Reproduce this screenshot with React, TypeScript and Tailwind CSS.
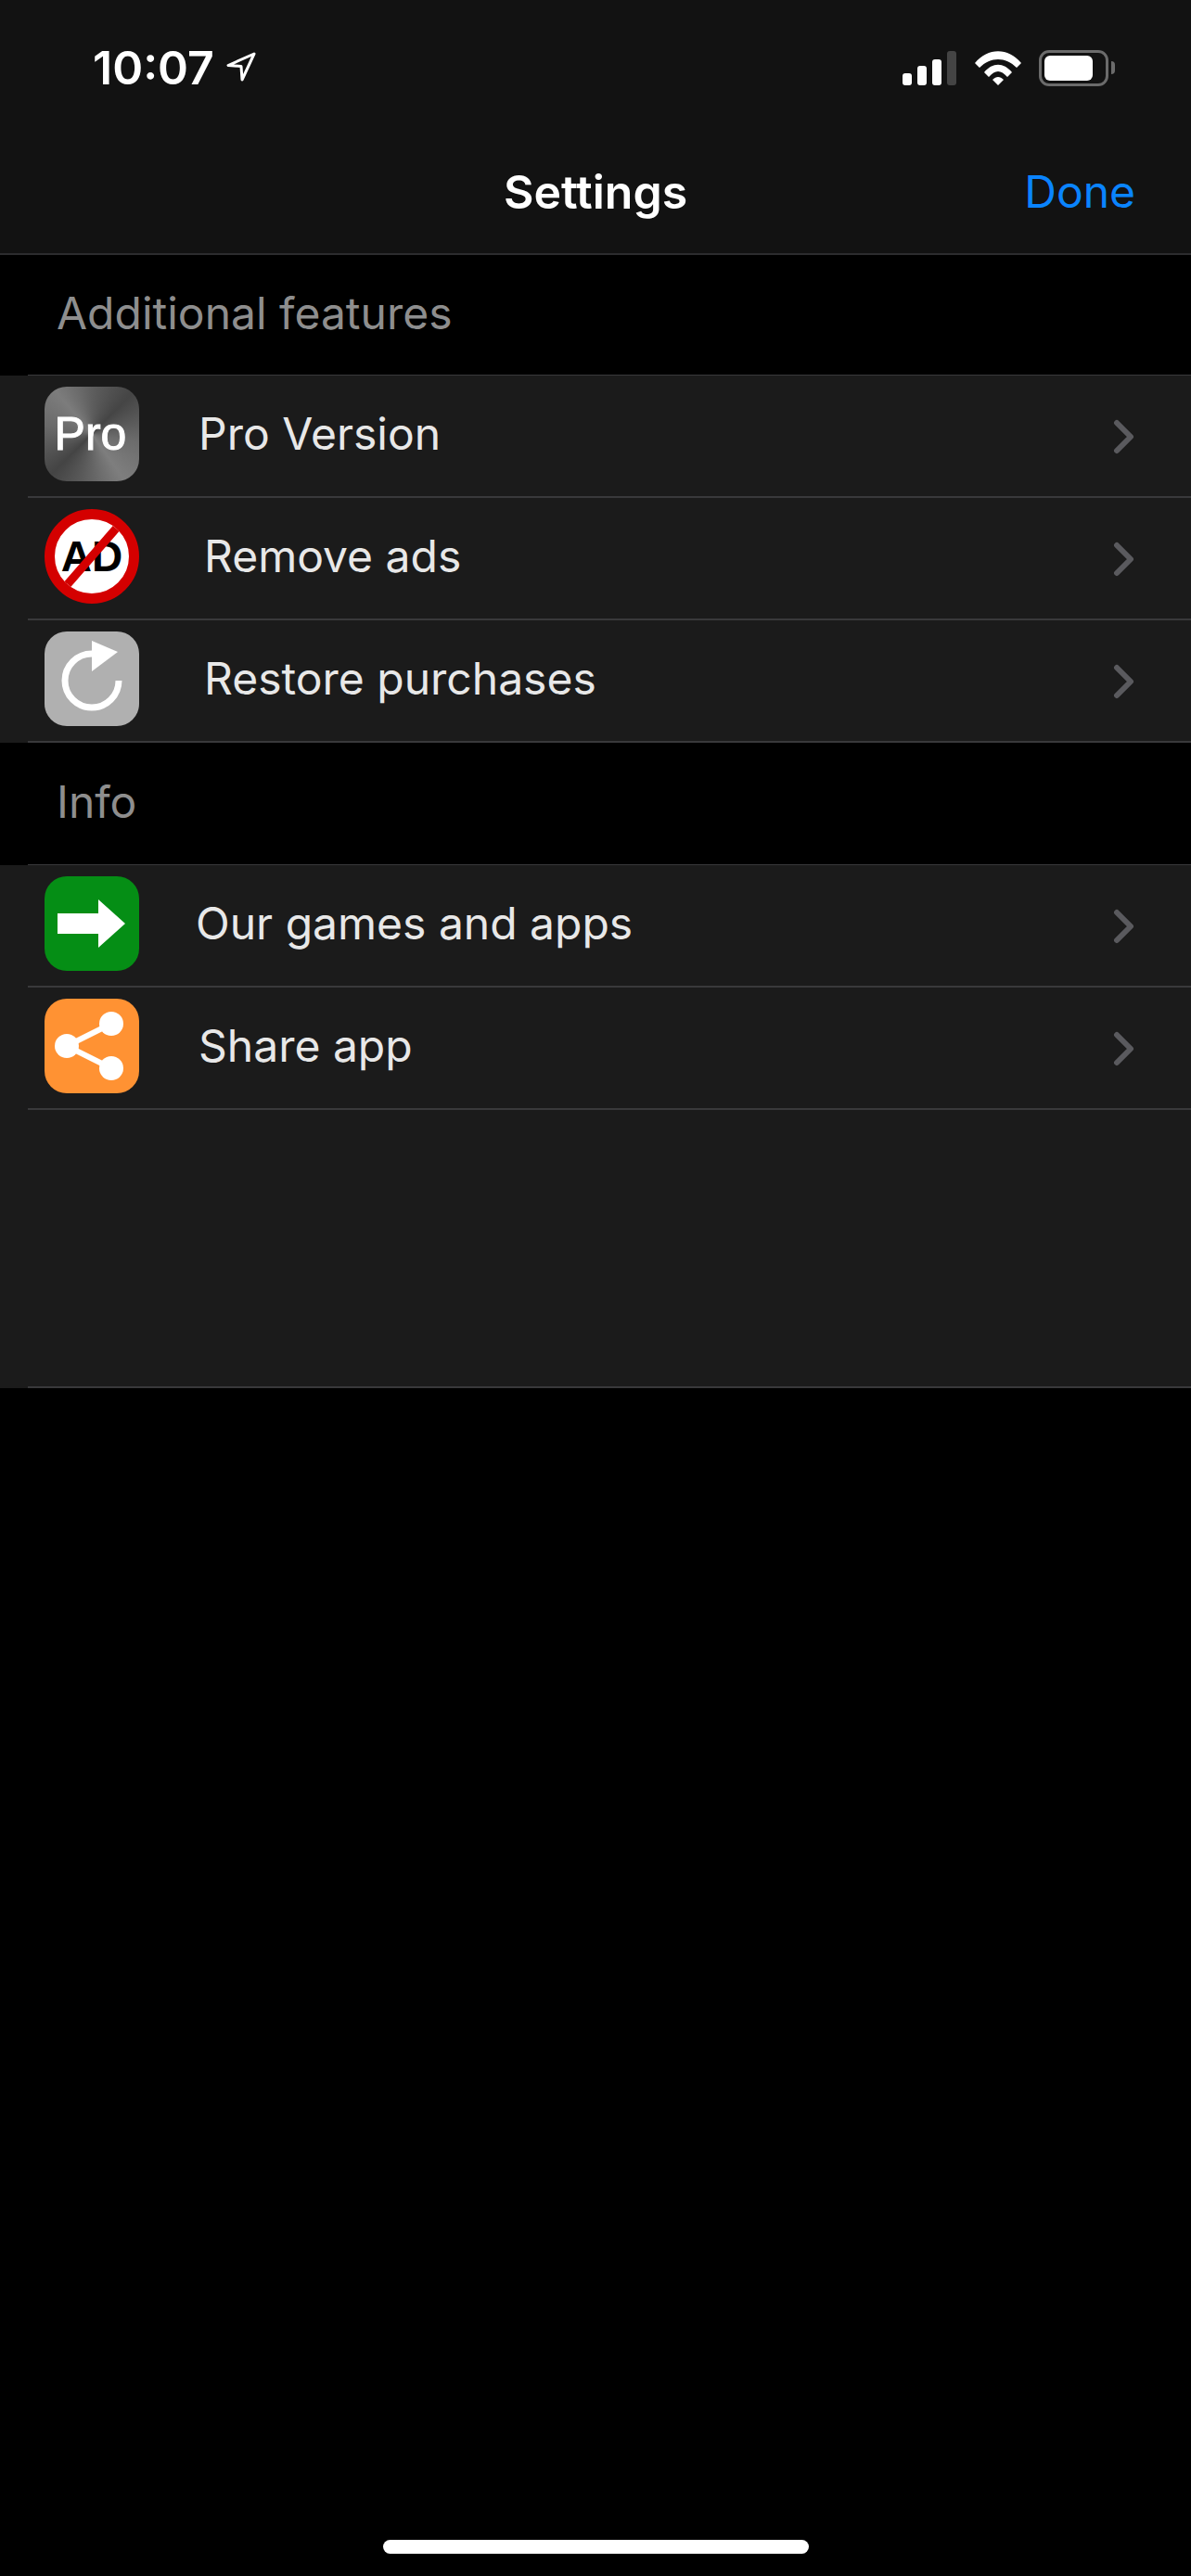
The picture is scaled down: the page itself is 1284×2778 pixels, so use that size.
import type { ReactNode } from 'react';

const font = "font-['Inter',sans-serif]";

function LocationArrow() {
  return (
    <svg viewBox="0 0 32 32" className="w-[32px] h-[32px] ml-[13px] mt-[-3px]" fill="none">
      <path d="M30 2 L2 14.500 L16 15.500 L17 30 Z" stroke="#fff" strokeWidth="3" strokeLinejoin="round" />
    </svg>
  );
}

function StatusIcons() {
  return (
    <div className="flex items-center">
      <div className="flex items-end gap-[6px] h-[37px]">
        <div className="w-[10px] h-[13px] rounded-[3px] bg-white" />
        <div className="w-[10px] h-[21px] rounded-[3px] bg-white" />
        <div className="w-[10px] h-[28px] rounded-[3px] bg-white" />
        <div className="w-[10px] h-[37px] rounded-[3px] bg-[#444]" />
      </div>
      <svg viewBox="0 0 50 37" className="w-[50px] h-[37px] ml-[20px]" fill="#fff">
        <path d="M0 13 C14 -4 36 -4 50 13 L45 18 C33 6 17 6 5 18 Z" />
        <path d="M10 23 C19 12 31 12 40 23 L35 28 C28 20 22 20 15 28 Z" />
        <path d="M19 31 C23 27 27 27 31 31 L25 37 Z" />
      </svg>
      <div className="flex items-center ml-[19px]">
        <div className="w-[75px] h-[39px] rounded-[11px] border-[3px] border-[#6b6b6b] p-[3px]">
          <div className="w-[52px] h-[27px] rounded-[6px] bg-white" />
        </div>
        <div className="w-[4px] h-[14px] ml-[3px] rounded-r-full bg-[#6b6b6b]" />
      </div>
    </div>
  );
}

function IconFrame({ className, children }: { className: string; children?: ReactNode }) {
  return (
    <div className={`w-[102px] h-[102px] shrink-0 rounded-[24px] flex items-center justify-center ${className}`}>
      {children}
    </div>
  );
}

function ProIcon() {
  return (
    <IconFrame className="bg-[conic-gradient(from_0deg,#5e5e5e,#454545_45deg,#6c6c6c_100deg,#7e7e7e_145deg,#5c5c5c_190deg,#444_225deg,#6a6a6a_280deg,#7c7c7c_320deg,#5e5e5e)]">
      <span className="mr-[3px] text-white text-[50px] font-['Liberation_Sans',sans-serif] leading-none [-webkit-text-stroke:1px_white]">Pro</span>
    </IconFrame>
  );
}

function NoAdIcon() {
  return (
    <div className="relative w-[102px] h-[102px] shrink-0 rounded-full bg-white border-[11px] border-[#d40000] flex items-center justify-center overflow-hidden">
      <span className="text-black text-[46px] font-bold font-['Liberation_Sans',sans-serif] leading-none">AD</span>
      <div className="absolute left-1/2 top-1/2 w-[100px] h-[9px] -translate-x-1/2 -translate-y-1/2 -rotate-[49deg] bg-[#d40000]" />
    </div>
  );
}

function RestoreIcon() {
  return (
    <IconFrame className="bg-[#b0b0b0]">
      <svg viewBox="0 0 102 102" className="w-[102px] h-[102px]" fill="none">
        <path d="M80 53 A29 29 0 1 1 51 24" stroke="#fff" strokeWidth="7" />
        <path d="M51 10 L79 22 L51 43 Z" fill="#fff" />
      </svg>
    </IconFrame>
  );
}

function ArrowIcon() {
  return (
    <IconFrame className="bg-[#058e15]">
      <svg viewBox="0 0 102 102" className="w-[102px] h-[102px]" fill="#fff">
        <path d="M14 40 H58 V25 L87 51 L58 77 V62 H14 Z" />
      </svg>
    </IconFrame>
  );
}

function ShareIcon() {
  return (
    <IconFrame className="bg-[#ff9233]">
      <svg viewBox="0 0 102 102" className="w-[102px] h-[102px]" fill="#fff">
        <path d="M24 51 L72 27 M24 51 L72 75" stroke="#fff" strokeWidth="6" />
        <circle cx="24" cy="51" r="13" />
        <circle cx="72" cy="27" r="13" />
        <circle cx="72" cy="75" r="13" />
      </svg>
    </IconFrame>
  );
}

function Row({ icon, label, gap }: { icon: ReactNode; label: string; gap: string }) {
  return (
    <div className="bg-[#1b1b1b] pl-[30px]">
      <div className="h-[132px] border-b-2 border-[#39393b] pl-[18px] pb-[4px] flex items-center">
        {icon}
        <span className={`${gap} text-[48px] text-[#e8e8e8] leading-none`}>{label}</span>
        <svg viewBox="0 0 24 38" className="ml-auto mr-[60px] mt-[6px] w-[24px] h-[38px]" fill="none">
          <path d="M4 4 L19 19 L4 34" stroke="#5a5a5e" strokeWidth="6" strokeLinecap="round" strokeLinejoin="round" />
        </svg>
      </div>
    </div>
  );
}

function SectionTitle({ children, height }: { children: string; height: string }) {
  return (
    <div className="bg-black">
      <div className={`${height} pl-[61px] pb-[4px] flex items-center text-[48px] text-[#8e8e8e] leading-none`}>{children}</div>
      <div className="ml-[30px] h-[1px] bg-[#39393b]" />
    </div>
  );
}

export default function App() {
  return (
    <div className={`${font} w-[1284px] min-h-[2778px] bg-black flex flex-col`}>
      <header className="h-[275px] bg-[#121212] border-b-2 border-[#2c2c2e] flex flex-col">
        <div className="h-[146px] pl-[100px] pr-[82px] flex items-center justify-between">
          <div className="flex items-center">
            <span className="text-white text-[50px] font-semibold leading-none">10:07</span>
            <LocationArrow />
          </div>
          <StatusIcons />
        </div>
        <div className="grid grid-cols-3 items-center h-[122px] px-[60px]">
          <div />
          <div className="text-center text-white text-[50px] font-semibold leading-none">Settings</div>
          <div className="text-right text-[#0a84ff] text-[48px] leading-none">Done</div>
        </div>
      </header>

      <SectionTitle height="h-[129px]">Additional features</SectionTitle>
      <Row icon={<ProIcon />} label="Pro Version" gap="ml-[64px]" />
      <Row icon={<NoAdIcon />} label="Remove ads" gap="ml-[70px]" />
      <Row icon={<RestoreIcon />} label="Restore purchases" gap="ml-[70px]" />

      <SectionTitle height="h-[131px]">Info</SectionTitle>
      <Row icon={<ArrowIcon />} label="Our games and apps" gap="ml-[61px]" />
      <Row icon={<ShareIcon />} label="Share app" gap="ml-[64px]" />

      <div className="bg-[#1b1b1b] pl-[30px]">
        <div className="h-[300px] border-b-2 border-[#39393b]" />
      </div>

      <div className="mt-auto pb-[24px] flex justify-center">
        <div className="w-[459px] h-[15px] rounded-full bg-white" />
      </div>
    </div>
  );
}
